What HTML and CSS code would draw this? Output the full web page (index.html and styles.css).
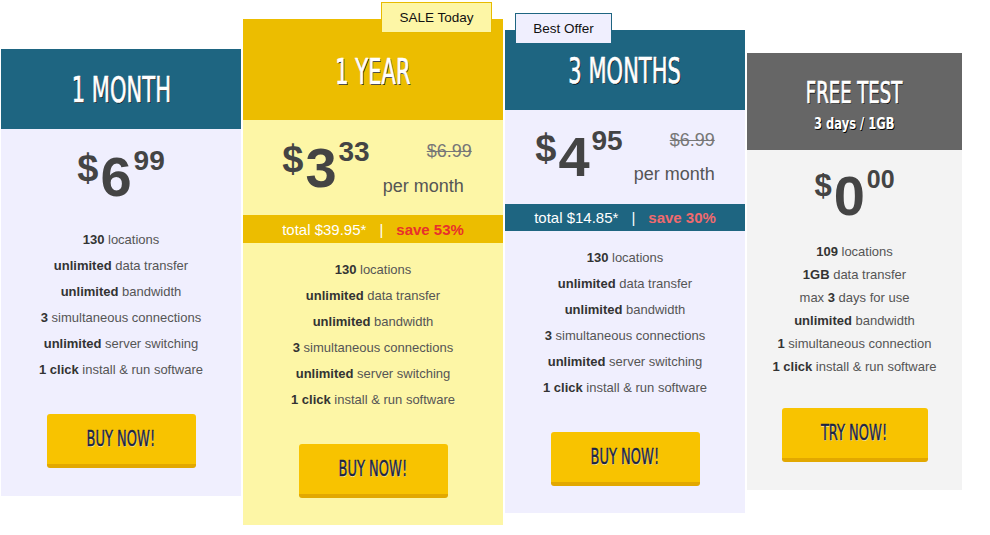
FILE: index.html
```html
<!DOCTYPE html>
<html lang="en">
<head>
<meta charset="utf-8">
<title>Pricing</title>
<link rel="stylesheet" href="styles.css">
</head>
<body>
<div class="plans">
  <div class="card card-month">
    <div class="head head-blue head-80"><span class="title">1 MONTH</span></div>
    <div class="body">
      <div class="price-row">
        <div class="price"><span class="cur">$</span><span class="int">6</span><span class="cents">99</span></div>
      </div>
      <ul class="features">
        <li><b>130</b> locations</li>
        <li><b>unlimited</b> data transfer</li>
        <li><b>unlimited</b> bandwidth</li>
        <li><b>3</b> simultaneous connections</li>
        <li><b>unlimited</b> server switching</li>
        <li><b>1 click</b> install &amp; run software</li>
      </ul>
      <a class="btn" href="#"><span class="btn-text">BUY NOW!</span></a>
    </div>
  </div>

  <div class="card card-year">
    <div class="badge badge-sale">SALE Today</div>
    <div class="head head-yellow head-101"><span class="title">1 YEAR</span></div>
    <div class="price-area price-area-year">
      <div class="price-row price-row-year">
        <div class="price"><span class="cur">$</span><span class="int">3</span><span class="cents">33</span></div>
        <div class="side side-year">
          <div class="old">$6.99</div>
          <div class="per">per month</div>
        </div>
      </div>
    </div>
    <div class="total total-yellow"><span>total $39.95*</span><span class="pipe">|</span><span class="save save-red">save 53%</span></div>
    <div class="body body-after-total">
      <ul class="features">
        <li><b>130</b> locations</li>
        <li><b>unlimited</b> data transfer</li>
        <li><b>unlimited</b> bandwidth</li>
        <li><b>3</b> simultaneous connections</li>
        <li><b>unlimited</b> server switching</li>
        <li><b>1 click</b> install &amp; run software</li>
      </ul>
      <a class="btn" href="#"><span class="btn-text">BUY NOW!</span></a>
    </div>
  </div>

  <div class="card card-three">
    <div class="badge badge-best">Best Offer</div>
    <div class="head head-blue head-80"><span class="title">3 MONTHS</span></div>
    <div class="price-area price-area-three">
      <div class="price-row">
        <div class="price"><span class="cur">$</span><span class="int">4</span><span class="cents">95</span></div>
        <div class="side">
          <div class="old">$6.99</div>
          <div class="per">per month</div>
        </div>
      </div>
    </div>
    <div class="total total-blue"><span>total $14.85*</span><span class="pipe">|</span><span class="save save-pink">save 30%</span></div>
    <div class="body body-after-total">
      <ul class="features">
        <li><b>130</b> locations</li>
        <li><b>unlimited</b> data transfer</li>
        <li><b>unlimited</b> bandwidth</li>
        <li><b>3</b> simultaneous connections</li>
        <li><b>unlimited</b> server switching</li>
        <li><b>1 click</b> install &amp; run software</li>
      </ul>
      <a class="btn" href="#"><span class="btn-text">BUY NOW!</span></a>
    </div>
  </div>

  <div class="card card-free">
    <div class="head head-gray head-free">
      <span class="title title-free">FREE TEST</span>
      <span class="subtitle">3 days / 1GB</span>
    </div>
    <div class="body body-free">
      <div class="price-row">
        <div class="price price-free"><span class="cur">$</span><span class="int">0</span><span class="cents">00</span></div>
      </div>
      <ul class="features features-tight">
        <li><b>109</b> locations</li>
        <li><b>1GB</b> data transfer</li>
        <li>max <b>3</b> days for use</li>
        <li><b>unlimited</b> bandwidth</li>
        <li><b>1</b> simultaneous connection</li>
        <li><b>1 click</b> install &amp; run software</li>
      </ul>
      <a class="btn btn-try" href="#"><span class="btn-text">TRY NOW!</span></a>
    </div>
  </div>
</div>
</body>
</html>
```

FILE: styles.css
```css
html, body {
  margin: 0;
  padding: 0;
  background: #ffffff;
}

body {
  font-family: "Liberation Sans", Arial, sans-serif;
  color: #555555;
}

.plans {
  display: flex;
  align-items: flex-start;
  gap: 2px;
  padding-left: 1px;
}

.card {
  position: relative;
  display: flex;
  flex-direction: column;
}

.card-month { width: 240px; margin-top: 49px; background: #f0effe; }
.card-year  { width: 260px; margin-top: 19px; background: #fdf6a6; }
.card-three { width: 240px; margin-top: 30px; background: #f0effe; }
.card-free  { width: 215px; margin-top: 53px; background: #f3f3f3; }

/* headers */
.head {
  display: flex;
  flex-direction: column;
  align-items: center;
  justify-content: center;
  color: #ffffff;
}
.head-blue { background: #1e6581; }
.head-yellow { background: #ecbd00; }
.head-gray { background: #666666; }
.head-80 { height: 80px; padding-top: 2px; box-sizing: border-box; }
.head-101 { height: 101px; padding-top: 4px; box-sizing: border-box; }
.head-free {
  height: 97px;
  justify-content: flex-start;
  padding-top: 25px;
  box-sizing: border-box;
}

.title {
  display: inline-block;
  font-family: "DejaVu Sans Condensed", "Liberation Sans", sans-serif;
  font-size: 36px;
  line-height: 1;
  white-space: nowrap;
  transform: scaleX(0.65);
  -webkit-text-stroke: 0.7px #ffffff;
  text-shadow: 1px 1px 0 #000000;
}
.title-free {
  font-size: 30px;
  transform: scaleX(0.67);
}
.subtitle {
  display: inline-block;
  margin-top: 6px;
  font-family: "DejaVu Sans Condensed", "Liberation Sans", sans-serif;
  font-weight: bold;
  font-size: 16px;
  line-height: 20px;
  white-space: nowrap;
  transform: scaleX(0.8);
  text-shadow: 1px 1px 0 #000000;
}

/* badges */
.badge {
  position: absolute;
  top: -17px;
  height: 31px;
  box-sizing: border-box;
  font-size: 13.5px;
  line-height: 29px;
  text-align: center;
  color: #111111;
  z-index: 2;
}
.badge-sale {
  right: 11px;
  width: 111px;
  background: #fdf6a6;
  border: 1px solid #e8bb00;
}
.badge-best {
  left: 10px;
  width: 97px;
  background: #f0effe;
  border: 1px solid #1e6581;
}

/* price */
.body {
  display: flex;
  flex-direction: column;
  align-items: center;
  padding: 18px 0 28px;
}
.body-free { padding-top: 16px; }
.body-after-total { padding-top: 14px; padding-bottom: 27px; }

.price-area { padding: 18px 0 19px; }
.price-area-three { padding-top: 17px; }

.price-row {
  display: flex;
  justify-content: center;
  align-items: flex-start;
  gap: 11px;
}
.price-row-year { gap: 13px; padding-left: 8px; }

.price {
  display: flex;
  align-items: flex-start;
  gap: 2px;
  color: #444444;
  font-weight: bold;
  line-height: 1;
}
.cur { font-size: 38px; margin-top: 2px; }
.int { font-size: 56px; margin-top: 2px; }
.cents { font-size: 28px; }

.price-free .cur { font-size: 31px; margin-top: 4px; }
.price-free .cents { font-size: 25px; margin-top: 1px; }

.side {
  display: flex;
  flex-direction: column;
  align-items: flex-end;
  font-size: 18px;
  line-height: 1;
}
.old {
  margin-top: 4px;
  color: #777777;
  text-decoration: line-through;
}
.per {
  margin-top: 16px;
  color: #555555;
}
.side-year .per { margin-right: 8px; margin-top: 17px; }

/* total bar */
.total {
  display: flex;
  justify-content: center;
  align-items: center;
  height: 28px;
  font-size: 15px;
  color: #ffffff;
}
.total-yellow { background: #ecbd00; }
.total-blue { background: #1e6581; height: 27px; }
.pipe { margin: 0 13px; }
.save { font-weight: bold; }
.save-red { color: #e8302c; }
.save-pink { color: #f06a6e; }

/* features */
.features {
  list-style: none;
  margin: 22px 0 0;
  padding: 0;
  text-align: center;
  font-size: 13px;
  line-height: 26px;
  color: #555555;
}
.body-after-total .features { margin-top: 0; }
.features b { color: #333333; }
.features-tight { line-height: 23px; margin-top: 16px; }

/* buttons */
.btn {
  display: block;
  margin-top: 31px;
  width: 149px;
  height: 50px;
  border-bottom: 4px solid #e2a800;
  border-radius: 3px;
  background: #f8c300;
  text-align: center;
  text-decoration: none;
  line-height: 50px;
}
.btn-try { width: 146px; margin-top: 30px; }
.btn-text {
  display: inline-block;
  font-family: "DejaVu Sans Condensed", "Liberation Sans", sans-serif;
  font-size: 21px;
  color: #1b2444;
  transform: scaleX(0.69);
  -webkit-text-stroke: 0.4px #1b2444;
  text-shadow: 1px 1px 0 rgba(255, 255, 255, 0.6);
  white-space: nowrap;
}
```
